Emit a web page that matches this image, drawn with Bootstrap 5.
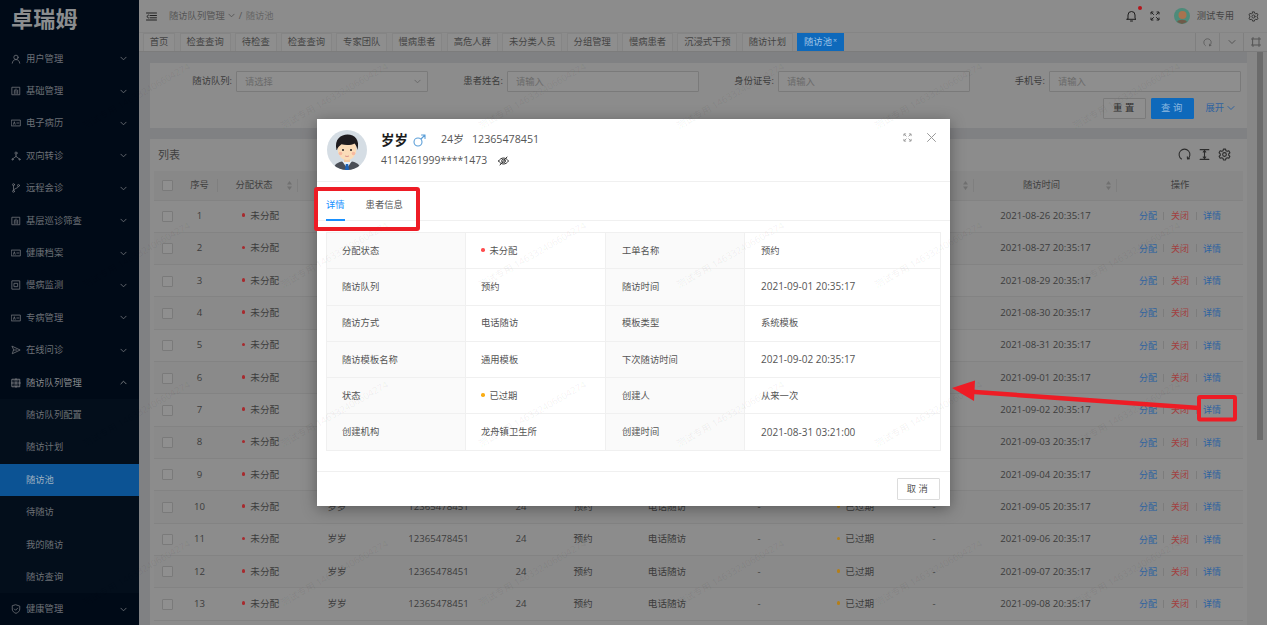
<!DOCTYPE html>
<html lang="zh-CN">
<head>
<meta charset="utf-8">
<title>随访池</title>
<link href="https://cdn.jsdelivr.net/npm/bootstrap@5.3.0/dist/css/bootstrap.min.css" rel="stylesheet">
<style>
html,body{height:100%;overflow:hidden}
body{width:1267px;height:625px;position:relative;background:#808183;color:#3c3c3c;font:9.3px/1.3 "Open Sans","Noto Sans CJK SC",sans-serif}
svg{display:block;flex:none}
.ico{fill:none;stroke:currentColor;stroke-width:1;stroke-linecap:round;stroke-linejoin:round}
.side{width:139px;height:625px;background:#000a17;color:#6c7076;flex:none}
.logo{height:42.5px;padding:5px 0 0 11px;font-size:22px;line-height:26px;font-weight:700;color:#8b8d8f;letter-spacing:.3px}
.mitem{height:32.4px;padding:0 12px 0 11px;gap:5px}
.mitem .grow{flex:1}
.mitem.open{color:#85888c}
.subm{background:#030e1b}
.subm .mitem{padding-left:26px}
.subm .mitem.on{background:#0c5394;color:#9fb0c0}
.mainp{flex:1;min-width:0;position:relative}
.tbar{height:32px;background:#8c8c8c;padding:0 6px 0 7px;color:#4a4a4a}
.crumb{color:#555;margin-left:12px;gap:3.5px}
.tabsrow{height:20px;background:#8c8c8c;border-top:1px solid #858585;border-bottom:1px solid #7c7c7c;padding-left:4px}
.tg{height:18px;padding:0 5.8px;margin-right:4.5px;border:1px solid #858585;border-bottom:0;background:#8e8e8e;font-size:9.3px;color:#444;white-space:nowrap}
.tg.on{background:#0e69bb;border-color:#0e69bb;color:#9fc4e6}
.tg sup{font-size:7px;top:-.2em;margin-left:1px}
.tooln{width:24px;height:18px;border-left:1px solid #7f7f7f;color:#555}
.pane{padding:11px 0 0 11px;width:1108px}
.cardb{background:#8c8c8c;width:1097px}
.qcard{height:65px;padding:8px 0 0 7px}
.qgrid{display:grid;grid-template-columns:repeat(4,271px)}
.qf{gap:4px;justify-content:flex-end}
.qf input{width:192px;height:21px;padding:0 8px;font-size:9.3px;background:#8e8e8e;border:1px solid #7a7a7a;border-radius:1px;color:#333}
.qf input::placeholder{color:#6a6a6a}
.qbtns{margin-top:6px;padding-right:12px;gap:5px;height:20px}
.btn.bq{height:21px;width:43px;padding:0;font-size:9.3px;letter-spacing:2.5px;border-radius:1px;background:#8e8e8e;border:1px solid #7a7a7a;color:#2e2e2e}
.btn.bq.pri{background:#0e69bb;border-color:#0e69bb;color:#8fb9e0}
.more{color:#2f63a0;margin-left:6px;gap:3px}
.lcard{margin-top:11px;height:486px;padding:0 4px;overflow:hidden}
.ltitle{height:31.5px;padding-left:4px;font-size:11px;color:#3f3f3f}
.licons{gap:7px;color:#2c2c2c;padding-right:12px}
.table.dtab{table-layout:fixed;margin:0;width:1089px;--bs-table-bg:transparent;--bs-table-color:#3c3c3c;--bs-table-border-color:#838383;font-size:9.3px}
.dtab th{height:29.5px;padding:0;background:#888888;font-weight:400;text-align:center;position:relative;vertical-align:middle;color:#3f3f3f}
.dtab td{height:32.33px;padding:0;text-align:center;vertical-align:middle;font-size:9.6px;white-space:nowrap}
.dtab tr:nth-child(even) td{background:#8a8a8a}
.dtab td.st1{padding-left:5px}
.dtab td.st2{padding-left:8px}
.hdiv{position:absolute;right:0;top:8px;bottom:8px;border-right:1px solid #7f7f7f}
.sorti{position:absolute;right:6px;top:10px}
.ck.form-check-input{width:11px;height:11px;margin:0;background-color:#8f8f8f;border:1px solid #7a7a7a;border-radius:1px;vertical-align:middle}
.dot{display:inline-block;width:3.5px;height:3.5px;border-radius:50%;margin-right:5px;vertical-align:2px}
.dr{background:#a72a2e}.da{background:#b57f18}
.acts{gap:6.5px;font-size:9px}
.acts a{text-decoration:none;color:#2f63a0}
.acts a.red{color:#a24040}
.acts i{width:1px;height:8px;background:#7c7c7c}
.sbar{position:absolute;right:0;top:52px;width:20px;height:573px;background:#878787}
.sbar div{position:absolute;left:10px;top:0;width:6px;height:388px;background:#6b6b6b}
.dlg{position:absolute;left:317px;top:119px;width:633px;height:387px;z-index:5}
.modal-content.mbox{height:387px;border:0;border-radius:0;background:#fff;box-shadow:0 3px 14px rgba(0,0,0,.35);color:#555}
.mhead{height:63px;border-bottom:1px solid #f0f0f0;padding:11px 10px 0 10px;position:relative}
.pinfo{margin-left:14px;padding-top:1px;font-size:10.7px;color:#555}
.pname{font-size:13.5px;font-weight:700;color:#1c1c1c;line-height:18px}
.pid{font-size:10.4px}
.mtools{position:absolute;right:14px;top:14px;gap:15px;color:#999}
.nav-tabs.mtabs{height:39px;margin-top:0;padding:4px 0 0 9px;border-bottom:1px solid #f0f0f0;gap:21px;font-size:9.3px}
.mtabs .nav-link{border:0;padding:0;height:35px;line-height:38px;background:none;color:#555;border-radius:0}
.mtabs .nav-link.active{color:#1890ff;border-bottom:2px solid #1890ff;background:none}
.mbody{padding:11px 9px 0}
.table.itab{table-layout:fixed;width:614px;margin:0;--bs-table-border-color:#f0f0f0;--bs-table-color:#555;--bs-table-bg:transparent;font-size:9.3px}
.itab td{height:36.3px;padding:0 15px;vertical-align:middle;white-space:nowrap;border-width:1px}
.itab td:nth-child(n+3){padding-left:16px}
.itab td.lb{background:#fafafa}
.itab td.num{font-size:10px}
.mfoot{position:absolute;left:0;right:0;bottom:0;height:35px;border-top:1px solid #f0f0f0;padding:6px 10px 0 0}
.btn.bc{height:22px;width:43px;padding:0;font-size:9.3px;letter-spacing:2.5px;border:1px solid #dcdcdc;border-radius:1px;background:#fff;color:#555}
.wm{position:absolute;font-size:9.5px;white-space:nowrap;color:rgba(0,0,0,.065);transform:rotate(-30deg);transform-origin:0 100%;pointer-events:none;z-index:6}
.mark1{position:absolute;inset:0;pointer-events:none;z-index:7}
</style>
</head>
<body>
<svg width="0" height="0" style="position:absolute">
<defs>
<symbol id="i-chev" viewBox="0 0 8 8"><path d="M1 2.500 4 5.500 7 2.500"/></symbol>
<symbol id="i-user" viewBox="0 0 12 12"><circle cx="6" cy="4" r="2.600"/><path d="M1.500 11c.4-2.800 2.100-4.300 4.500-4.300s4.100 1.500 4.500 4.300"/></symbol>
<symbol id="i-chart" viewBox="0 0 12 12"><rect x="1.500" y="1.500" width="9" height="9"/><path d="M4 9V6M6 9V3.500M8 9V5M4 5h1"/></symbol>
<symbol id="i-emr" viewBox="0 0 12 12"><rect x=".8" y="2.500" width="10.400" height="7"/><path d="M3 7.500 4 4.500 5 7.500M7 6h2.500"/></symbol>
<symbol id="i-net" viewBox="0 0 12 12"><circle cx="6" cy="2.500" r="1.300"/><path d="M6 4v2.500M6 6.500 2 9.500M6 6.500l4 3"/><circle cx="1.800" cy="10" r=".8"/><circle cx="10.200" cy="10" r=".8"/></symbol>
<symbol id="i-branch" viewBox="0 0 12 12"><circle cx="3" cy="2" r="1.200"/><circle cx="3" cy="10" r="1.200"/><circle cx="9" cy="3" r="1.200"/><path d="M3 3.200v5.600M9 4.200c0 2.500-6 2-6 4.600"/></symbol>
<symbol id="i-mon" viewBox="0 0 12 12"><rect x="1.500" y="1" width="9" height="10"/><rect x="4" y="4" width="4" height="4"/></symbol>
<symbol id="i-send" viewBox="0 0 12 12"><path d="M1.500 1.500 11 6 1.500 10.500 3 6ZM3 6h4"/></symbol>
<symbol id="i-grid" viewBox="0 0 12 12"><rect x="1.500" y="1.500" width="9" height="9"/><path d="M6 .8v10.400M.8 6h10.400M3.500 3.500h.5M8 3.500h.5M3.500 8.500h.5M8 8.500h.5"/></symbol>
<symbol id="i-shield" viewBox="0 0 12 12"><path d="M6 1 10.500 2.500V6c0 2.700-2 4.300-4.500 5.200C3.500 10.300 1.500 8.700 1.500 6V2.500Z"/><path d="M4 6 5.500 7.500 8 5"/></symbol>
<symbol id="i-gear" viewBox="0 0 12 12"><path d="M5 1h2l.3 1.500 1.200.6L10 2.600l1 1.800-1.100 1 0 1.300 1.100 1-1 1.800-1.500-.5-1.200.6L7 11H5l-.3-1.400-1.200-.6-1.500.5-1-1.800 1.100-1V5.400L1 4.400l1-1.800 1.500.5 1.200-.6Z"/><circle cx="6" cy="6" r="1.700"/></symbol>
<symbol id="i-exp" viewBox="0 0 10 10"><path d="M1 3V1h2M9 3V1H7M1 7v2h2M9 7v2H7M1.500 1.500l2 2M8.500 1.500l-2 2M1.500 8.500l2-2M8.500 8.500l-2-2"/></symbol>
<symbol id="i-ref" viewBox="0 0 12 12"><path d="M3.200 10.200A5 5 0 1 1 8.800 10.200M8.800 10.200l-.2-2M8.800 10.200l1.800-.2"/></symbol>
</defs>
</svg>

<div class="d-flex">
<aside class="side">
  <div class="logo">卓瑞姆</div>
  <div class="d-flex align-items-center mitem"><svg class="ico" width="10" height="10"><use href="#i-user"/></svg><span class="grow">用户管理</span><svg class="ico" width="7" height="7"><use href="#i-chev"/></svg></div>
  <div class="d-flex align-items-center mitem"><svg class="ico" width="10" height="10"><use href="#i-chart"/></svg><span class="grow">基础管理</span><svg class="ico" width="7" height="7"><use href="#i-chev"/></svg></div>
  <div class="d-flex align-items-center mitem"><svg class="ico" width="10" height="10"><use href="#i-emr"/></svg><span class="grow">电子病历</span><svg class="ico" width="7" height="7"><use href="#i-chev"/></svg></div>
  <div class="d-flex align-items-center mitem"><svg class="ico" width="10" height="10"><use href="#i-net"/></svg><span class="grow">双向转诊</span><svg class="ico" width="7" height="7"><use href="#i-chev"/></svg></div>
  <div class="d-flex align-items-center mitem"><svg class="ico" width="10" height="10"><use href="#i-branch"/></svg><span class="grow">远程会诊</span><svg class="ico" width="7" height="7"><use href="#i-chev"/></svg></div>
  <div class="d-flex align-items-center mitem"><svg class="ico" width="10" height="10"><use href="#i-chart"/></svg><span class="grow">基层巡诊筛查</span><svg class="ico" width="7" height="7"><use href="#i-chev"/></svg></div>
  <div class="d-flex align-items-center mitem"><svg class="ico" width="10" height="10"><use href="#i-emr"/></svg><span class="grow">健康档案</span><svg class="ico" width="7" height="7"><use href="#i-chev"/></svg></div>
  <div class="d-flex align-items-center mitem"><svg class="ico" width="10" height="10"><use href="#i-mon"/></svg><span class="grow">慢病监测</span><svg class="ico" width="7" height="7"><use href="#i-chev"/></svg></div>
  <div class="d-flex align-items-center mitem"><svg class="ico" width="10" height="10"><use href="#i-emr"/></svg><span class="grow">专病管理</span><svg class="ico" width="7" height="7"><use href="#i-chev"/></svg></div>
  <div class="d-flex align-items-center mitem"><svg class="ico" width="10" height="10"><use href="#i-send"/></svg><span class="grow">在线问诊</span><svg class="ico" width="7" height="7"><use href="#i-chev"/></svg></div>
  <div class="d-flex align-items-center mitem open"><svg class="ico" width="10" height="10"><use href="#i-grid"/></svg><span class="grow">随访队列管理</span><svg class="ico" width="7" height="7" style="transform:scaleY(-1)"><use href="#i-chev"/></svg></div>
  <div class="subm">
    <div class="d-flex align-items-center mitem">随访队列配置</div>
    <div class="d-flex align-items-center mitem">随访计划</div>
    <div class="d-flex align-items-center mitem on">随访池</div>
    <div class="d-flex align-items-center mitem">待随访</div>
    <div class="d-flex align-items-center mitem">我的随访</div>
    <div class="d-flex align-items-center mitem">随访查询</div>
  </div>
  <div class="d-flex align-items-center mitem"><svg class="ico" width="10" height="10"><use href="#i-shield"/></svg><span class="grow">健康管理</span><svg class="ico" width="7" height="7"><use href="#i-chev"/></svg></div>
</aside>

<div class="mainp">
  <header class="tbar d-flex align-items-center">
    <svg class="ico" width="11" height="9" viewBox="0 0 11 9" style="color:#222"><path d="M.5 1h10M4 3.500h6.500M4 5.800h6.500M.5 8h10M2.600 3 .8 4.500l1.800 1.500"/></svg>
    <nav class="crumb d-flex align-items-center flex-grow-1"><span>随访队列管理</span><svg class="ico" width="7" height="7"><use href="#i-chev"/></svg><span>/</span><span style="color:#666">随访池</span></nav>
    <div class="position-relative" style="margin-right:13px"><svg class="ico" width="11" height="12" viewBox="0 0 11 12" style="color:#1d1d1d"><path d="M2 8.500V5a3.500 3.500 0 0 1 7 0v3.500l1 .8H1ZM4.500 11h2"/></svg><span class="position-absolute rounded-circle" style="width:4px;height:4px;background:#b5161c;right:-5px;top:-4px"></span></div>
    <svg class="ico" width="10" height="10" style="color:#222;margin-right:14px"><use href="#i-exp"/></svg>
    <svg width="16" height="16" viewBox="0 0 16 16" style="margin-right:7px"><circle cx="8" cy="8" r="8" fill="#4d8b7a"/><circle cx="8.500" cy="7" r="4" fill="#a8734f"/><path d="M3 14c1-3 9-3 10 0l-5 2Z" fill="#6f5a49"/></svg>
    <span style="color:#444;margin-right:14px">测试专用</span>
    <svg class="ico" width="11" height="11" style="color:#333;margin-right:2px"><use href="#i-gear"/></svg>
  </header>

  <div class="tabsrow d-flex align-items-end">
    <span class="tg d-flex align-items-center">首页</span><span class="tg d-flex align-items-center">检查查询</span><span class="tg d-flex align-items-center">待检查</span><span class="tg d-flex align-items-center">检查查询</span><span class="tg d-flex align-items-center">专家团队</span><span class="tg d-flex align-items-center">慢病患者</span><span class="tg d-flex align-items-center">高危人群</span><span class="tg d-flex align-items-center">未分类人员</span><span class="tg d-flex align-items-center">分组管理</span><span class="tg d-flex align-items-center">慢病患者</span><span class="tg d-flex align-items-center">沉浸式干预</span><span class="tg d-flex align-items-center">随访计划</span><span class="tg on d-flex align-items-center">随访池<sup>×</sup></span>
    <span class="ms-auto d-flex">
      <span class="tooln d-flex align-items-center justify-content-center"><svg class="ico" width="9" height="9"><use href="#i-ref"/></svg></span>
      <span class="tooln d-flex align-items-center justify-content-center"><svg class="ico" width="8" height="8"><use href="#i-chev"/></svg></span>
      <span class="tooln d-flex align-items-center justify-content-center"><svg class="ico" width="10" height="10" viewBox="0 0 10 10"><path d="M2 2h6v6H2ZM.5 2H2V.5M8 .5V2h1.500M.5 8H2v1.500M8 9.500V8h1.500"/></svg></span>
    </span>
  </div>

  <div class="pane">
    <section class="cardb qcard">
      <div class="qgrid">
        <div class="qf d-flex align-items-center"><label>随访队列:</label><div class="position-relative"><input class="form-control" placeholder="请选择"><svg class="ico position-absolute" width="7" height="7" style="right:7px;top:7px;color:#666"><use href="#i-chev"/></svg></div></div>
        <div class="qf d-flex align-items-center"><label>患者姓名:</label><input class="form-control" placeholder="请输入"></div>
        <div class="qf d-flex align-items-center"><label>身份证号:</label><input class="form-control" placeholder="请输入"></div>
        <div class="qf d-flex align-items-center"><label>手机号:</label><input class="form-control" placeholder="请输入"></div>
      </div>
      <div class="qbtns d-flex justify-content-end align-items-center">
        <button class="btn bq" type="button">重置</button>
        <button class="btn bq pri" type="button">查询</button>
        <span class="more d-flex align-items-center">展开<svg class="ico" width="8" height="8"><use href="#i-chev"/></svg></span>
      </div>
    </section>
    <section class="cardb lcard">
      <div class="ltitle d-flex align-items-center justify-content-between"><span>列表</span>
        <div class="licons d-flex align-items-center">
          <svg class="ico" width="13" height="13"><use href="#i-ref"/></svg>
          <svg class="ico" width="13" height="13" viewBox="0 0 12 12"><path d="M2 1.500h8M2 10.500h8M6 2.500v7M4.800 3.700 6 2.500l1.200 1.200M4.800 8.300 6 9.500l1.200-1.200"/></svg>
          <svg class="ico" width="13" height="13"><use href="#i-gear"/></svg>
        </div>
      </div>
      <table class="table dtab">
        <colgroup><col style="width:27px"><col style="width:37px"><col style="width:80px"><col style="width:78px"><col style="width:125px"><col style="width:40px"><col style="width:84px"><col style="width:84px"><col style="width:100px"><col style="width:85px"><col style="width:80px"><col style="width:143px"><col style="width:126px"></colgroup>
        <thead><tr>
          <th><input class="form-check-input ck" type="checkbox" aria-label="全选"></th>
          <th>序号<span class="hdiv"></span></th>
          <th class="pe-2">分配状态<svg class="sorti" width="5" height="9" viewBox="0 0 5 9" fill="#707070"><path d="M2.500 0 5 3.500H0ZM2.500 9 0 5.500h5Z"/></svg><span class="hdiv"></span></th>
          <th>患者姓名</th><th>手机号</th><th>年龄</th><th>随访队列</th><th>随访方式</th><th>随访人</th><th>状态</th>
          <th>创建人<svg class="sorti" width="5" height="9" viewBox="0 0 5 9" fill="#707070"><path d="M2.500 0 5 3.500H0ZM2.500 9 0 5.500h5Z"/></svg><span class="hdiv"></span></th>
          <th class="pe-2">随访时间<svg class="sorti" width="5" height="9" viewBox="0 0 5 9" fill="#707070"><path d="M2.500 0 5 3.500H0ZM2.500 9 0 5.500h5Z"/></svg><span class="hdiv"></span></th>
          <th>操作</th>
        </tr></thead>
        <tbody id="rows"></tbody>
      </table>
    </section>
  </div>
  <div class="sbar"><div></div></div>
</div>
</div>

<div class="dlg">
  <div class="modal-content mbox">
    <div class="mhead d-flex">
      <svg width="40" height="40" viewBox="0 0 40 40">
        <defs><clipPath id="av"><circle cx="20" cy="20" r="20"/></clipPath></defs>
        <g clip-path="url(#av)">
          <rect width="40" height="40" fill="#d5dde4"/>
          <path d="M6 40c1-7 7-9 14-9s13 2 14 9Z" fill="#4b4f57"/>
          <path d="M15 31 20 38 25 31Z" fill="#e8eef4"/>
          <path d="M18.800 34h2.400l.8 6h-4Z" fill="#1d63b8"/>
          <rect x="17" y="25" width="6" height="7" fill="#f2c9a0"/>
          <ellipse cx="20" cy="19" rx="9.500" ry="11" fill="#fbdcb8"/>
          <path d="M9.500 20C7 9 14 4.500 20.500 4.500 28 4.500 33 10 30.500 20c-.6-3-1.500-5-3-6.500-3 1.800-9 2-13 .8-2 1.500-4 3-4.500 5.700Z" fill="#1f1c1f"/>
          <circle cx="16" cy="20" r="1" fill="#222"/><circle cx="24" cy="20" r="1" fill="#222"/>
          <circle cx="13.500" cy="23.500" r="1.800" fill="#f7b9a0"/><circle cx="26.500" cy="23.500" r="1.800" fill="#f7b9a0"/>
          <path d="M18 26q2 1 4 0" stroke="#c77" fill="none" stroke-width=".7"/>
        </g>
      </svg>
      <div class="pinfo">
        <div class="d-flex align-items-center">
          <span class="pname">岁岁</span>
          <svg class="ico" width="13" height="13" viewBox="0 0 13 13" style="color:#5c9fd8;margin:0 15px 0 5px;stroke-width:1.100"><circle cx="5" cy="8" r="4"/><path d="M8 5 12 1M8.500 1H12v3.500"/></svg>
          <span>24岁</span><span style="margin-left:8px">12365478451</span>
        </div>
        <div class="d-flex align-items-center" style="margin-top:5px">
          <span class="pid">4114261999****1473</span>
          <svg class="ico" width="11" height="10" viewBox="0 0 11 10" style="color:#333;margin-left:11px"><path d="M.5 5C2 3 3.500 2 5.500 2S9 3 10.500 5C9 7 7.500 8 5.500 8S2 7 .5 5Z"/><circle cx="5.500" cy="5" r="1.800"/><path d="M2 9 9 1"/></svg>
        </div>
      </div>
      <div class="mtools d-flex align-items-center">
        <svg class="ico" width="9" height="9"><use href="#i-exp"/></svg>
        <svg class="ico" width="9" height="9" viewBox="0 0 9 9"><path d="M.5.5l8 8M8.500.5l-8 8"/></svg>
      </div>
    </div>
    <ul class="nav nav-tabs mtabs">
      <li class="nav-item"><a class="nav-link active" href="#">详情</a></li>
      <li class="nav-item"><a class="nav-link" href="#">患者信息</a></li>
    </ul>
    <div class="mbody">
      <table class="table table-bordered itab">
        <colgroup><col style="width:139px"><col style="width:140px"><col style="width:139px"><col style="width:196px"></colgroup>
        <tbody>
          <tr><td class="lb">分配状态</td><td><span class="dot" style="background:#ff4d4f"></span>未分配</td><td class="lb">工单名称</td><td>预约</td></tr>
          <tr><td class="lb">随访队列</td><td>预约</td><td class="lb">随访时间</td><td class="num">2021-09-01 20:35:17</td></tr>
          <tr><td class="lb">随访方式</td><td>电话随访</td><td class="lb">模板类型</td><td>系统模板</td></tr>
          <tr><td class="lb">随访模板名称</td><td>通用模板</td><td class="lb">下次随访时间</td><td class="num">2021-09-02 20:35:17</td></tr>
          <tr><td class="lb">状态</td><td><span class="dot" style="background:#faad14"></span>已过期</td><td class="lb">创建人</td><td>从来一次</td></tr>
          <tr><td class="lb">创建机构</td><td>龙舟镇卫生所</td><td class="lb">创建时间</td><td class="num">2021-08-31 03:21:00</td></tr>
        </tbody>
      </table>
    </div>
    <div class="mfoot d-flex justify-content-end align-items-start"><button class="btn bc" type="button">取消</button></div>
  </div>
</div>

<div id="wms"></div>

<svg class="mark1" width="1267" height="625" viewBox="0 0 1267 625">
  <rect x="316" y="189" width="102" height="40" rx="1" fill="none" stroke="#ee1c25" stroke-width="4"/>
  <rect x="1199" y="397" width="36" height="22.500" rx="1" fill="none" stroke="#ee1c25" stroke-width="4"/>
  <path d="M1199 408 968 391.500" fill="none" stroke="#ee1c25" stroke-width="4.500"/>
  <path d="M952 388 975 380.500 974 401Z" fill="#ee1c25"/>
</svg>

<script>
var dates=['08-26','08-27','08-29','08-30','08-31','09-01','09-02','09-03','09-04','09-05','09-06','09-07','09-08'];
document.getElementById('rows').innerHTML=dates.map(function(d,i){
  return '<tr><td><input class="form-check-input ck" type="checkbox" aria-label="选择"></td><td>'+(i+1)+'</td><td class="st1"><span class="dot dr"></span>未分配</td><td>岁岁</td><td>12365478451</td><td>24</td><td>预约</td><td>电话随访</td><td>-</td><td class="st2"><span class="dot da"></span>已过期</td><td>-</td><td>2021-'+d+' 20:35:17</td><td><div class="acts d-flex justify-content-center align-items-center"><a href="#">分配</a><i></i><a class="red" href="#">关闭</a><i></i><a href="#">详情</a></div></td></tr>';
}).join('');
var h='';
for(var y=130;y<700;y+=159){for(var x=87;x<1267;x+=198){h+='<span class="wm" style="left:'+x+'px;top:'+(y-10)+'px">测试专用 146332406604274</span>';}}
document.getElementById('wms').innerHTML=h;
</script>
<script src="https://cdn.jsdelivr.net/npm/bootstrap@5.3.0/dist/js/bootstrap.bundle.min.js"></script>
</body>
</html>
